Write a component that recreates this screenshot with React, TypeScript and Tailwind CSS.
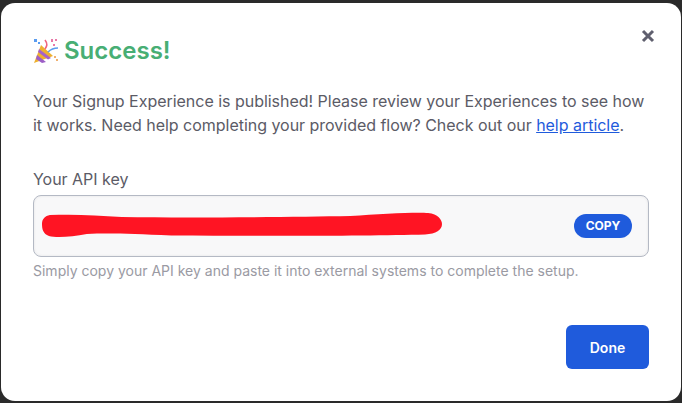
export default function App() {
  return (
    <div className="h-[403px] w-[682px] overflow-hidden bg-[#2a2a2a] pt-[3px] pr-[1px] pb-[2px] pl-[1px] font-['Inter',sans-serif]">
      <div className="relative h-[398px] rounded-[14px] bg-white pt-[32px] pr-[32px] pl-[32px]">
        <button className="absolute top-[26px] right-[26px] text-[#5f5f6e]" aria-label="Close">
          <svg width="14" height="14" viewBox="0 0 14 14" fill="none">
            <path d="M2 2L12 12M12 2L2 12" stroke="currentColor" strokeWidth="3" />
          </svg>
        </button>

        <h2 className="flex h-[32px] items-center gap-[5px] text-[24px] leading-[32px] font-semibold text-[#48ae74]">
          <svg width="26" height="26" viewBox="0 0 26 26" className="shrink-0">
            <path d="M1 25L8 7L20 18Z" fill="#eeb02f" />
            <path d="M4 17L13 24L9 25L3 21Z" fill="#9c5ec6" />
            <path d="M6 11L18 20L15 21.5L5 14Z" fill="#a562c9" />
            <path d="M12 11C14 8 15 6 12 2" stroke="#f0647c" strokeWidth="1.6" fill="none" />
            <path d="M15 14C18 11 21 10 25 10" stroke="#5a9cf0" strokeWidth="1.6" fill="none" />
            <rect x="1" y="1" width="3" height="3" fill="#5a9cf0" />
            <rect x="5" y="4" width="2" height="2" fill="#5a9cf0" />
            <rect x="18" y="1" width="2" height="3" fill="#e878a8" />
            <rect x="22" y="1" width="2" height="2" fill="#e878a8" />
            <rect x="20" y="6" width="2" height="2" fill="#e878a8" />
            <rect x="21" y="18" width="2" height="2" fill="#f0b070" />
            <rect x="23" y="21" width="2" height="2" fill="#f0b070" />
          </svg>
          Success!
        </h2>

        <p className="mt-[22px] text-[16px] leading-[24px] tracking-[-0.025px] text-[#5b5b66]">
          Your Signup Experience is published! Please review your Experiences to see how it works. Need help completing your provided flow? Check out our{" "}
          <a href="#" className="text-[#1f5bdc] underline">
            help article
          </a>
          .
        </p>

        <div className="mt-[30px] text-[16px] leading-[24px] tracking-[-0.025px] text-[#5b5b66]">Your API key</div>

        <div className="mt-[4px] flex h-[62px] items-center justify-between rounded-[8px] border border-[#b4b9c4] bg-[#f8f8f9] pr-[16px] pl-[8px] shadow-[inset_0_0_3px_rgba(0,0,0,0.08)]">
          <svg width="400" height="26" viewBox="0 0 402 26" className="shrink-0 -translate-y-[1px]">
            <path
              d="M8 3C30 2 55 3 80 5C150 6 250 5 310 4C340 2 375 0 388 1C398 2 402 8 402 12C402 18 396 22 385 22.5C330 24 230 24 130 23.5C90 22 70 21 45 22C30 25 14 26 7 24C1 22 0 17 0 12C0 7 3 4 8 3Z"
              fill="#ff1423"
            />
          </svg>
          <button className="flex h-[24px] w-[58px] items-center justify-center rounded-full bg-[#1f5bdc] text-[12px] font-bold text-white">
            COPY
          </button>
        </div>

        <p className="mt-[4px] text-[14px] leading-[20px] text-[#9a9aa3]">
          Simply copy your API key and paste it into external systems to complete the setup.
        </p>

        <div className="mt-[44px] flex justify-end">
          <button className="h-[44px] w-[83px] rounded-[6px] bg-[#1f5bdc] text-[14px] font-semibold text-white">
            Done
          </button>
        </div>
      </div>
    </div>
  );
}
